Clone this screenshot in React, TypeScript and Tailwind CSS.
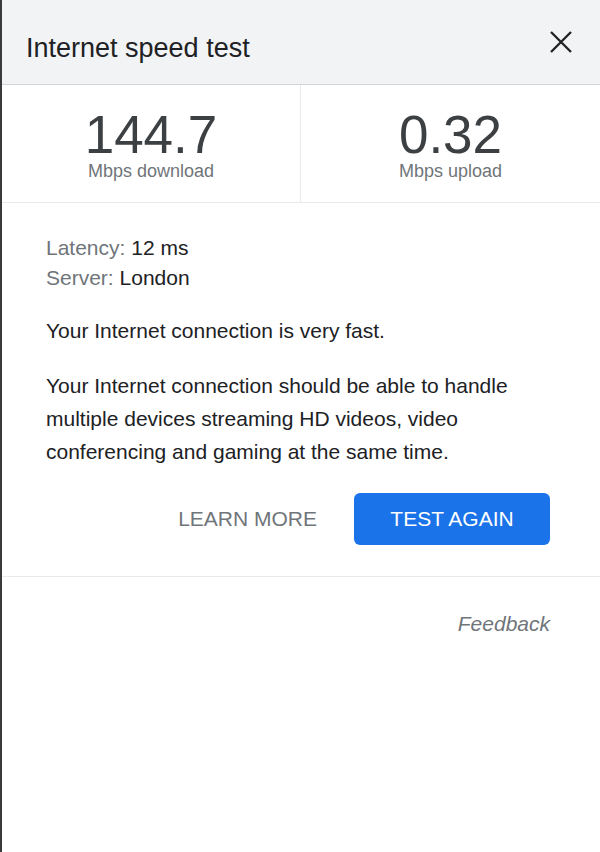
export default function App() {
  return (
    <div
      className="min-h-[852px] w-[600px] border-l-2 border-[#3a3a3a] bg-white text-[#202124]"
      style={{ fontFamily: '"Liberation Sans", Arial, sans-serif' }}
    >
      {/* Header */}
      <div className="flex h-[85px] items-start justify-between border-b border-[#d3d4d6] bg-[#f1f3f4] pl-6 pr-[28px] pt-[33px]">
        <h1 className="text-[27px] font-normal leading-[31px] text-[#202124]">Internet speed test</h1>
        <svg width="22" height="22" viewBox="0 0 22 22" className="-mt-[2px]">
          <path d="M1 1L21 21M21 1L1 21" stroke="#202124" strokeWidth="2.3" />
        </svg>
      </div>

      {/* Stats */}
      <div className="grid h-[118px] grid-cols-2 border-b border-[#e8eaed]">
        <div className="flex flex-col items-center border-r border-[#e8eaed] pt-[24px]">
          <div className="text-[53px] leading-[51px] text-[#3c4043]">144.7</div>
          <div className="text-[18px] leading-[22px] text-[#70757a]">Mbps download</div>
        </div>
        <div className="flex flex-col items-center pt-[24px]">
          <div className="text-[53px] leading-[51px] text-[#3c4043]">0.32</div>
          <div className="text-[18px] leading-[22px] text-[#70757a]">Mbps upload</div>
        </div>
      </div>

      {/* Details */}
      <div className="border-b border-[#e8eaed] pb-[31px] pl-11 pr-[50px] pt-[30px] text-[21px]">
        <div className="leading-[30px]">
          <div>
            <span className="text-[#70757a]">Latency:</span> 12 ms
          </div>
          <div>
            <span className="text-[#70757a]">Server:</span> London
          </div>
        </div>
        <p className="mt-[23px] leading-[30px]">Your Internet connection is very fast.</p>
        <p className="mt-[23px] leading-[33px]">
          Your Internet connection should be able to handle multiple devices streaming HD videos, video
          conferencing and gaming at the same time.
        </p>
        <div className="mt-[25px] flex items-center justify-end gap-[37px]">
          <button className="text-[21px] text-[#70757a]">LEARN MORE</button>
          <button className="h-[52px] w-[196px] rounded-md bg-[#1a73e8] text-[21px] text-white">
            TEST AGAIN
          </button>
        </div>
      </div>

      {/* Footer */}
      <div className="flex justify-end pr-[50px] pt-[31px]">
        <span className="text-[21px] italic text-[#70757a]">Feedback</span>
      </div>
    </div>
  );
}
